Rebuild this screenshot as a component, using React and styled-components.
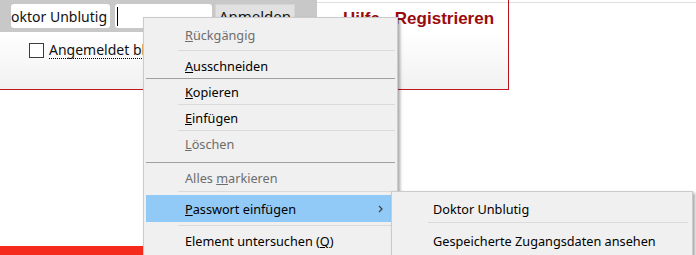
import React from "react";
import styled, { createGlobalStyle } from "styled-components";

const GlobalStyle = createGlobalStyle`
    html, body {
        margin: 0;
        padding: 0;
        background: #fff;
    }
    body {
        font-family: "Noto Sans", "DejaVu Sans", sans-serif;
    }
`;

const Page = styled.div`
    position: relative;
    width: 696px;
    height: 255px;
    overflow: hidden;
    display: flex;
    flex-direction: column;
`;

const TopRow = styled.div`
    display: flex;
`;

const LoginBox = styled.div`
    width: 508px;
    height: 89px;
    display: flex;
    border-right: 1px solid #b8121c;
    border-bottom: 1px solid #c4161f;
    background: linear-gradient(#fff 35%, #f1f1f1);
`;

const LoginPanel = styled.div`
    width: 317px;
    display: flex;
    flex-direction: column;
`;

const Bar = styled.div`
    height: 32px;
    background: #c8c8c8;
    display: flex;
    align-items: center;
    gap: 5px;
    padding-left: 11px;
`;

const Field = styled.div`
    width: ${(p) => p.$w}px;
    height: 24px;
    box-sizing: border-box;
    padding: 0 3px 0 2px;
    background: #fff;
    border-radius: 3px;
    display: flex;
    align-items: center;
    justify-content: ${(p) => (p.$end ? "flex-end" : "flex-start")};
    overflow: hidden;
    white-space: nowrap;
    font-size: 14px;
    color: #111;
`;

const Caret = styled.span`
    width: 1px;
    height: 19px;
    background: #000;
`;

const LoginButton = styled.div`
    width: 80px;
    height: 24px;
    margin-left: -2px;
    box-sizing: border-box;
    border: 1px solid #d4d4d4;
    background: #e1e1e1;
    display: flex;
    align-items: center;
    justify-content: center;
    font-size: 15px;
    color: #111;
`;

const Remember = styled.label`
    display: flex;
    align-items: center;
    gap: 5px;
    padding: 9px 0 0 29px;
    font-size: 14px;
    color: #111;
    white-space: nowrap;
`;

const Check = styled.span`
    width: 13px;
    height: 13px;
    border: 1px solid #3c3c3c;
    background: #fff;
`;

const RememberText = styled.span`
    border-bottom: 1px dotted #000;
    line-height: 17px;
`;

const Links = styled.div`
    flex: 1;
    margin-top: 2px;
    border-top: 1px solid #dedede;
    display: flex;
    align-items: flex-start;
    gap: 15px;
    padding: 6px 0 0 26px;
    font-family: "Liberation Sans", Arial, sans-serif;
    font-weight: bold;
    font-size: 17px;
    line-height: 20px;
    color: #9a0b0b;
`;

const Rest = styled.div`
    flex: 1;
    margin-top: 2px;
    border-top: 1px solid #dedede;
`;

const Spacer = styled.div`
    flex: 1;
`;

const RedBar = styled.div`
    width: 509px;
    height: 9px;
    background: #f62a1c;
`;

const Menu = styled.div`
    position: absolute;
    left: ${(p) => p.$x}px;
    top: ${(p) => p.$y}px;
    width: ${(p) => p.$w}px;
    height: 260px;
    box-sizing: border-box;
    padding: 3px 2px;
    background: #f0f0f0;
    border: 1px solid #cbcbcb;
    box-shadow: 2px 2px 3px rgba(0, 0, 0, 0.35);
    font-size: 12.7px;
    color: #000;
`;

const Item = styled.div`
    height: ${(p) => p.$h || 25}px;
    margin: ${(p) => p.$mt || 0}px ${(p) => p.$mr}px ${(p) => p.$mb || 0}px 0;
    padding: 0 10px 0 39px;
    display: flex;
    align-items: center;
    justify-content: space-between;
    white-space: nowrap;
    background: ${(p) => (p.$active ? "#91c9f7" : "transparent")};
    color: ${(p) => (p.$disabled ? "#6d6d6d" : "#000")};
`;

const Sep = styled.div`
    height: 1px;
    margin: ${(p) => p.$mt || 0}px ${(p) => (p.$dark ? 0 : p.$mr)}px ${(p) => p.$mb || 0}px
        ${(p) => (p.$dark ? 0 : p.$ml)}px;
    background: ${(p) => (p.$dark ? "#a0a0a0" : "#dadada")};
`;

const MENU = [
    { label: "Rückgängig", key: "R", disabled: true, mt: 1 },
    { sep: "light", mt: 3, mb: 2 },
    { label: "Ausschneiden", key: "A" },
    { sep: "dark" },
    { label: "Kopieren", key: "K" },
    { sep: "light" },
    { label: "Einfügen", key: "E" },
    { sep: "light" },
    { label: "Löschen", key: "L", disabled: true },
    { sep: "dark", mt: 6, mb: 2 },
    { label: "Alles markieren", key: "m", disabled: true },
    { sep: "light", mt: 1 },
    { label: "Passwort einfügen", key: "P", active: true, sub: true, h: 27, mt: 3, mb: 3 },
    { sep: "light" },
    { label: "Element untersuchen (Q)", key: "Q", mt: 2 },
];

const SUBMENU = [
    { label: "Doktor Unblutig", h: 27 },
    { sep: "light", mb: 5 },
    { label: "Gespeicherte Zugangsdaten ansehen" },
];

const withKey = (label, key) => {
    if (!key) return label;
    const i = label.indexOf(key);
    return (
        <span>
            {label.slice(0, i)}
            <u>{label[i]}</u>
            {label.slice(i + 1)}
        </span>
    );
};

const Chevron = () => (
    <svg width="5" height="8" viewBox="0 0 5 8">
        <path d="M1 1 L4 4 L1 7" fill="none" stroke="#444" strokeWidth="1.3" />
    </svg>
);

const MenuList = ({ items, ml, mr }) =>
    items.map((it, i) =>
        it.sep ? (
            <Sep key={i} $dark={it.sep === "dark"} $mt={it.mt} $mb={it.mb} $ml={ml} $mr={mr} />
        ) : (
            <Item
                key={i}
                $h={it.h}
                $mt={it.mt}
                $mb={it.mb}
                $mr={mr + 2}
                $active={it.active}
                $disabled={it.disabled}
            >
                {withKey(it.label, it.key)}
                {it.sub && <Chevron />}
            </Item>
        )
    );

const App = () => {
    return (
        <>
            <GlobalStyle />
            <Page>
                <TopRow>
                    <LoginBox>
                        <LoginPanel>
                            <Bar>
                                <Field $w={99} $end>
                                    Doktor Unblutig
                                </Field>
                                <Field $w={97}>
                                    <Caret />
                                </Field>
                                <LoginButton>Anmelden</LoginButton>
                            </Bar>
                            <Remember>
                                <Check />
                                <RememberText>Angemeldet bleiben</RememberText>
                            </Remember>
                        </LoginPanel>
                        <Links>
                            <span>Hilfe</span>
                            <span>Registrieren</span>
                        </Links>
                    </LoginBox>
                    <Rest />
                </TopRow>
                <Spacer />
                <RedBar />

                <Menu $x={143} $y={17} $w={255}>
                    <MenuList items={MENU} ml={32} mr={0} />
                </Menu>
                <Menu $x={391} $y={191} $w={302}>
                    <MenuList items={SUBMENU} ml={34} mr={2} />
                </Menu>
            </Page>
        </>
    );
};

export default App;
